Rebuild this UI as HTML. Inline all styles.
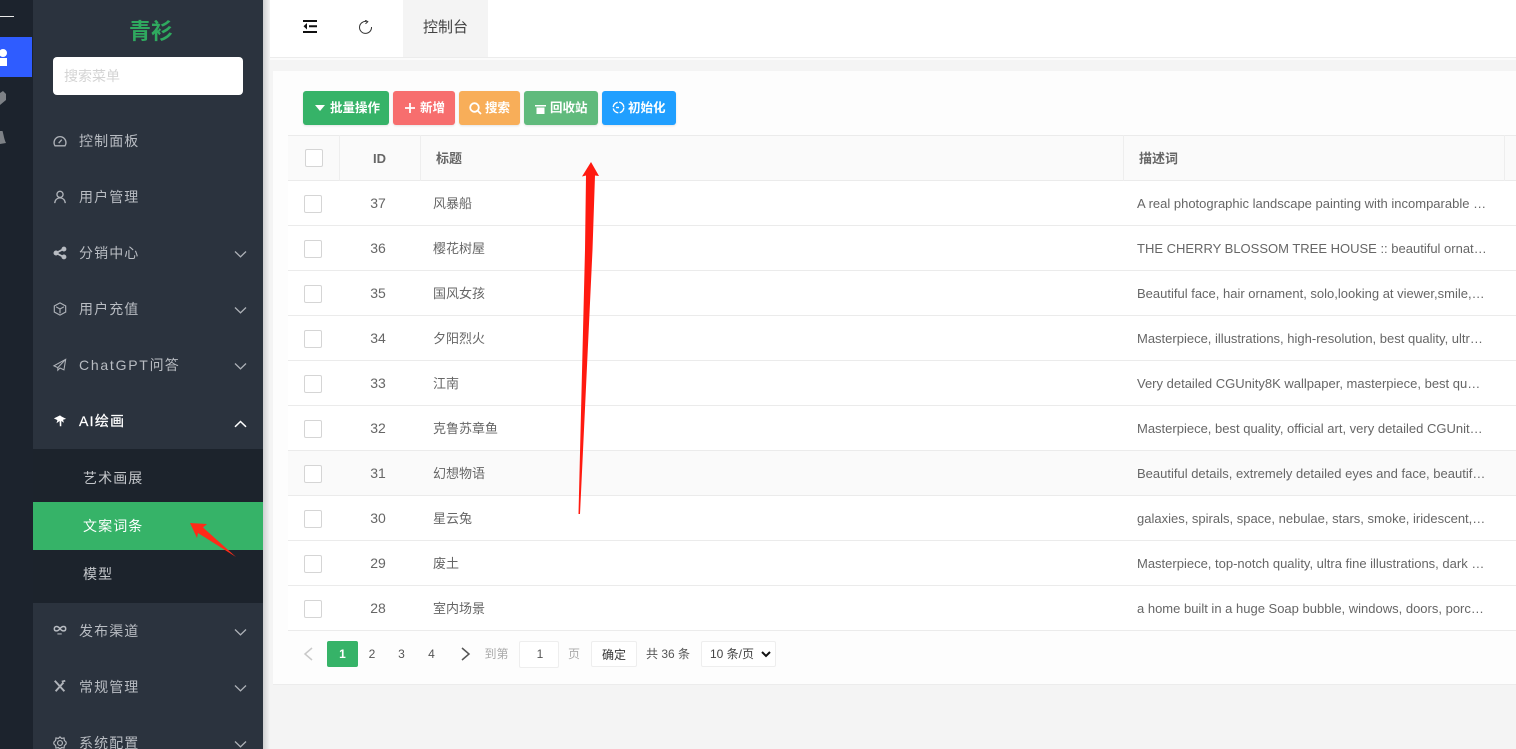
<!DOCTYPE html>
<html lang="zh"><head><meta charset="utf-8"><title>青衫</title>
<style>
*{box-sizing:border-box}
html,body{margin:0;padding:0;width:1516px;height:749px;overflow:hidden;background:#f4f4f4;font-family:"Liberation Sans","Noto Sans CJK SC",sans-serif;font-size:14px;color:#666}
.a{position:absolute;white-space:nowrap}
#strip{left:0;top:0;width:33px;height:749px;background:#1c232d}
#side{left:33px;top:0;width:230px;height:749px;background:#2b333e;overflow:hidden}
#shadow{left:263px;top:0;width:7px;height:749px;background:linear-gradient(90deg,#cfd0d2,#f4f4f4)}
.mi{left:46px;height:20px;line-height:20px;color:#b8bcc2;letter-spacing:1.1px;font-size:14px}
.ic{position:absolute;left:20px;width:14px;height:14px;overflow:visible}
.ch{position:absolute;left:201px;width:13px;height:8px}
.sub{left:50px;height:20px;line-height:20px;color:#c3c6ca;letter-spacing:1.1px}
.btn{position:absolute;top:91px;height:34px;border-radius:3px;color:#fff;font-size:12.5px;font-weight:bold;line-height:34px;white-space:nowrap;box-shadow:0 1px 2px rgba(0,0,0,.1)}
.btn svg{position:absolute;top:10px}
.btn span{position:absolute;top:0}
.hl{position:absolute;left:288px;width:1228px;height:1px;background:#ebebeb}
.cb{position:absolute;width:18px;height:18px;background:#fff;border:1px solid #d5d5d5;border-radius:2px;left:304px}
.id{position:absolute;left:339px;width:78px;text-align:center;height:20px;line-height:20px;font-size:14px;color:#666}
.ti{position:absolute;left:433px;height:20px;line-height:22px;font-size:13px;color:#666}
.de{position:absolute;left:1137px;width:350px;height:22px;line-height:22px;font-size:13px;color:#666;overflow:hidden;white-space:nowrap;text-overflow:ellipsis}
.th{position:absolute;top:149px;height:20px;line-height:20px;font-weight:bold;font-size:13px;color:#666}
.vl{position:absolute;top:135px;width:1px;height:46px;background:#eee}
.pg{position:absolute;top:641px;height:26px;line-height:26px;font-size:12px;color:#555;text-align:center}
</style></head><body>
<div class="a" id="strip"></div>
<div class="a" style="left:0;top:16px;width:14px;height:1px;background:#e8e8e8"></div>
<div class="a" style="left:0;top:37px;width:32px;height:40px;background:#2f5cff"></div>
<svg class="a" style="left:0;top:47px" width="10" height="20"><circle cx="3" cy="6" r="4" fill="#fff"/><rect x="-2" y="11" width="9" height="8" fill="#fff"/></svg>
<svg class="a" style="left:0;top:90px" width="8" height="16"><path d="M0 3L3 1L6 4V10L0 15Z" fill="#7d8186"/></svg>
<svg class="a" style="left:0;top:128px" width="8" height="18"><path d="M0 3H2.500C3.500 6 4 11 6 15L0 16Z" fill="#7d8186"/></svg>

<div class="a" id="side">
<div class="a" style="left:96px;top:18px;font-size:22px;line-height:28px;font-weight:bold;color:#2fa95f">青衫</div>
<div class="a" style="left:20px;top:57px;width:190px;height:38px;background:#fff;border-radius:4px;line-height:39px;padding-left:11px;font-size:14px;color:#d4d4d4">搜索菜单</div>

<svg class="ic" style="top:134px" viewBox="0 0 16 16" fill="none" stroke="#aeb2b8" stroke-width="1.500"><path d="M2.300 13.500A6.800 6.800 0 1 1 13.700 13.500Z"/><path d="M6.500 10.500L10 6.500"/></svg>
<div class="a mi" style="top:131px">控制面板</div>
<svg class="ic" style="top:190px" viewBox="0 0 16 16" fill="none" stroke="#b0b4ba" stroke-width="1.500"><circle cx="8" cy="5" r="3.500"/><path d="M2 15C2.200 11 5 9 8 9S13.800 11 14 15"/></svg>
<div class="a mi" style="top:187px">用户管理</div>
<svg class="ic" style="top:246px" viewBox="0 0 16 16" fill="#b8bcc2" stroke="#b8bcc2"><circle cx="3.500" cy="8" r="2.400"/><circle cx="12.500" cy="3.500" r="2.300"/><circle cx="12.500" cy="12.500" r="2.300"/><path d="M3.500 8L12 3.500M3.500 8L12 12.500" stroke-width="2"/></svg>
<div class="a mi" style="top:243px">分销中心</div>
<svg class="ic" style="top:302px" viewBox="0 0 16 16" fill="none" stroke="#aeb2b8" stroke-width="1.300"><path d="M8 1L14.500 4.500V11.500L8 15L1.500 11.500V4.500Z"/><path d="M3.500 5.500L8 8L12.500 5.500M8 8V13"/></svg>
<div class="a mi" style="top:299px">用户充值</div>
<svg class="ic" style="top:358px" viewBox="0 0 16 16" fill="none" stroke="#aeb2b8" stroke-width="1.200"><path d="M1 9L14.500 1.500L12.500 13.500L8 11.500L5.500 14V11Z"/><path d="M5.500 11L14.500 1.500"/></svg>
<div class="a mi" style="top:355px"><span style="letter-spacing:1.75px">ChatGPT</span>问答</div>
<svg class="ic" style="top:414px" viewBox="0 0 16 16" fill="#fff"><path d="M1 5L6 2.500L8 1.500L10 3L15 5.500L11.500 6.500L12.500 10L9.500 8L9.500 14H7.800L7.500 8L4 10.500L5 7Z"/></svg>
<div class="a mi" style="top:411px;color:#fff;-webkit-text-stroke:.25px #fff;letter-spacing:1.3px">AI绘画</div>

<div class="a" style="left:0;top:449px;width:230px;height:154px;background:#1c232c"></div>
<div class="a" style="left:0;top:502px;width:230px;height:48px;background:#36b368"></div>
<div class="a sub" style="top:468px">艺术画展</div>
<div class="a sub" style="top:516px;color:#fff">文案词条</div>
<div class="a sub" style="top:564px">模型</div>

<svg class="ic" style="top:623px" viewBox="0 0 16 16" fill="none" stroke="#b8bcc2" stroke-width="1.700"><path d="M8 6.500C6.500 4.500 5.500 4 4 4C2.500 4 1.500 5 1.500 6.500S2.500 9 4 9C5.500 9 6.500 8.500 8 6.500C9.500 4.500 10.500 4 12 4C13.500 4 14.500 5 14.500 6.500S13.500 9 12 9C10.500 9 9.500 8.500 8 6.500Z"/><path d="M5 12.500H10" stroke-width="1.200"/></svg>
<div class="a mi" style="top:621px">发布渠道</div>
<svg class="ic" style="top:679px" viewBox="0 0 16 16" fill="none" stroke="#b0b4ba" stroke-width="2.200"><path d="M3 14L12 4M2 2L13 14"/><path d="M10 3L14 2" stroke-width="2"/></svg>
<div class="a mi" style="top:677px">常规管理</div>
<svg class="ic" style="top:736px" viewBox="0 0 16 16" fill="none" stroke="#b0b4ba" stroke-width="1.400"><circle cx="8" cy="8" r="2.800"/><path d="M8 1L9.800 2.800L12.600 2.200L13 5L15 7V9L13 11L12.600 13.800L9.800 13.200L8 15L6.200 13.200L3.400 13.800L3 11L1 9V7L3 5L3.400 2.200L6.200 2.800Z"/></svg>
<div class="a mi" style="top:733px">系统配置</div>

<svg class="ch" style="top:250px" viewBox="0 0 13 8" fill="none" stroke="#adb1b7" stroke-width="1.300"><path d="M1 1.500L6.500 6.800L12 1.500"/></svg>
<svg class="ch" style="top:306px" viewBox="0 0 13 8" fill="none" stroke="#adb1b7" stroke-width="1.300"><path d="M1 1.500L6.500 6.800L12 1.500"/></svg>
<svg class="ch" style="top:362px" viewBox="0 0 13 8" fill="none" stroke="#adb1b7" stroke-width="1.300"><path d="M1 1.500L6.500 6.800L12 1.500"/></svg>
<svg class="ch" style="top:420px" viewBox="0 0 13 8" fill="none" stroke="#fff" stroke-width="1.500"><path d="M1 6.800L6.500 1.500L12 6.800"/></svg>
<svg class="ch" style="top:628px" viewBox="0 0 13 8" fill="none" stroke="#adb1b7" stroke-width="1.300"><path d="M1 1.500L6.500 6.800L12 1.500"/></svg>
<svg class="ch" style="top:684px" viewBox="0 0 13 8" fill="none" stroke="#adb1b7" stroke-width="1.300"><path d="M1 1.500L6.500 6.800L12 1.500"/></svg>
<svg class="ch" style="top:740px" viewBox="0 0 13 8" fill="none" stroke="#adb1b7" stroke-width="1.300"><path d="M1 1.500L6.500 6.800L12 1.500"/></svg>
</div>
<div class="a" id="shadow"></div>

<div class="a" style="left:270px;top:0;width:1246px;height:57px;background:#fff"></div>
<div class="a" style="left:270px;top:57px;width:1246px;height:3px;background:#fbfbfb;border-top:1px solid #ececec"></div>
<div class="a" style="left:403px;top:0;width:85px;height:57px;background:#f4f4f4;text-align:center;line-height:55px;font-size:15px;color:#444">控制台</div>
<svg class="a" style="left:303px;top:20px" width="15" height="13" viewBox="0 0 15 13" fill="none" stroke="#111" stroke-width="2"><path d="M0 1H14M6 6.300H14M0 12H14"/><path d="M4 3L.5 6.300L4 9.500" fill="#111" stroke="none"/></svg>
<svg class="a" style="left:358px;top:20px" width="15" height="15" viewBox="0 0 15 15" fill="none" stroke="#333" stroke-width="1"><path d="M8.500 1.500A6 6 0 1 0 13.500 7"/><path d="M7 0L9.800 1.700L7.500 3.800" stroke-width="1"/></svg>

<div class="a" style="left:273px;top:71px;width:1243px;height:614px;background:#fdfdfd;border-bottom:1px solid #ececec"></div>
<div class="a" style="left:288px;top:181px;width:1228px;height:450px;background:#fff"></div>
<div class="a" style="left:288px;top:451px;width:1228px;height:45px;background:#fafafa"></div>

<div class="btn" style="left:303px;width:86px;background:#36b368"><svg style="left:12px;top:14px" width="10" height="6"><path d="M0 0H10L5 6Z" fill="#fff"/></svg><span style="left:27px">批量操作</span></div>
<div class="btn" style="left:393px;width:62px;background:#f76e6e"><svg style="left:12px;top:12px" width="10" height="10"><path d="M5 0V10M0 5H10" stroke="#fff" stroke-width="1.800"/></svg><span style="left:27px">新增</span></div>
<div class="btn" style="left:459px;width:61px;background:#f8ae59"><svg style="left:10px;top:11px" width="13" height="13" fill="none" stroke="#fff" stroke-width="1.800"><circle cx="5.500" cy="5.500" r="4.300"/><path d="M8.500 8.500L12 12"/></svg><span style="left:26px">搜索</span></div>
<div class="btn" style="left:524px;width:74px;background:#60ba7c"><svg style="left:11px;top:13px" width="11" height="10" fill="#fff"><path d="M0 1H11V2.500H0ZM1.500 3.500H9.500V10H1.500Z"/></svg><span style="left:26px">回收站</span></div>
<div class="btn" style="left:602px;width:74px;background:#209fff"><svg style="left:10px;top:10px" width="13" height="13" fill="none" stroke="#fff" stroke-width="1.400" stroke-dasharray="7 1.500"><circle cx="6.500" cy="6.500" r="5.300"/><path d="M4 6.500H7" stroke-dasharray="none"/></svg><span style="left:26px">初始化</span></div>

<div class="a" style="left:288px;top:135px;width:1228px;height:46px;background:#fafafa;border-top:1px solid #ebebeb;border-bottom:1px solid #ebebeb"></div>
<div class="vl" style="left:339px"></div><div class="vl" style="left:420px"></div><div class="vl" style="left:1123px"></div><div class="vl" style="left:1504px"></div>
<div class="cb" style="left:305px;top:149px"></div>
<div class="th" style="left:339px;width:81px;text-align:center">ID</div>
<div class="th" style="left:436px">标题</div>
<div class="th" style="left:1139px">描述词</div>

<div class="hl" style="top:225px"></div><div class="hl" style="top:270px"></div><div class="hl" style="top:315px"></div><div class="hl" style="top:360px"></div><div class="hl" style="top:405px"></div><div class="hl" style="top:450px"></div><div class="hl" style="top:495px"></div><div class="hl" style="top:540px"></div><div class="hl" style="top:585px"></div><div class="hl" style="top:630px"></div>

<div class="cb" style="top:195px"></div><div class="id" style="top:193px">37</div><div class="ti" style="top:193px">风暴船</div><div class="de" style="top:193px">A real photographic landscape painting with incomparable reality, super wide angle</div>
<div class="cb" style="top:240px"></div><div class="id" style="top:238px">36</div><div class="ti" style="top:238px">樱花树屋</div><div class="de" style="top:238px">THE CHERRY BLOSSOM TREE HOUSE :: beautiful ornate treehouse</div>
<div class="cb" style="top:285px"></div><div class="id" style="top:283px">35</div><div class="ti" style="top:283px">国风女孩</div><div class="de" style="top:283px">Beautiful face, hair ornament, solo,looking at viewer,smile,closed mouth,lipstick</div>
<div class="cb" style="top:330px"></div><div class="id" style="top:328px">34</div><div class="ti" style="top:328px">夕阳烈火</div><div class="de" style="top:328px">Masterpiece, illustrations, high-resolution, best quality, ultra-detailed, sunset</div>
<div class="cb" style="top:375px"></div><div class="id" style="top:373px">33</div><div class="ti" style="top:373px">江南</div><div class="de" style="top:373px">Very detailed CGUnity8K wallpaper, masterpiece, best quality, illustration</div>
<div class="cb" style="top:420px"></div><div class="id" style="top:418px">32</div><div class="ti" style="top:418px">克鲁苏章鱼</div><div class="de" style="top:418px">Masterpiece, best quality, official art, very detailed CGUnity 8k wallpaper</div>
<div class="cb" style="top:465px"></div><div class="id" style="top:463px">31</div><div class="ti" style="top:463px">幻想物语</div><div class="de" style="top:463px">Beautiful details, extremely detailed eyes and face, beautiful detailed nose</div>
<div class="cb" style="top:510px"></div><div class="id" style="top:508px">30</div><div class="ti" style="top:508px">星云兔</div><div class="de" style="top:508px">galaxies, spirals, space, nebulae, stars, smoke, iridescent, intricate detail</div>
<div class="cb" style="top:555px"></div><div class="id" style="top:553px">29</div><div class="ti" style="top:553px">废土</div><div class="de" style="top:553px">Masterpiece, top-notch quality, ultra fine illustrations, dark wasteland ruins</div>
<div class="cb" style="top:600px"></div><div class="id" style="top:598px">28</div><div class="ti" style="top:598px">室内场景</div><div class="de" style="top:598px">a home built in a huge Soap bubble, windows, doors, porches, awnings, middle</div>

<svg class="a" style="left:303px;top:647px" width="10" height="14" fill="none" stroke="#c9c9c9" stroke-width="1.500"><path d="M9 1L2 7L9 13"/></svg>
<div class="pg" style="left:327px;top:641px;width:31px;background:#36b368;color:#fff;border-radius:2px;font-weight:bold">1</div>
<div class="pg" style="left:357px;width:30px">2</div>
<div class="pg" style="left:387px;width:29px">3</div>
<div class="pg" style="left:417px;width:29px">4</div>
<svg class="a" style="left:461px;top:647px" width="10" height="14" fill="none" stroke="#555" stroke-width="1.500"><path d="M1 1L8 7L1 13"/></svg>
<div class="pg" style="left:484.500px;color:#aaa">到第</div>
<div class="pg" style="left:519px;top:641px;width:40px;height:27px;background:#fff;border:1px solid #eee;border-radius:2px;line-height:25px;padding-left:2px">1</div>
<div class="pg" style="left:568px;color:#aaa">页</div>
<div class="pg" style="left:591px;width:46px;background:#fff;border:1px solid #eee;border-radius:2px;line-height:27px;color:#333">确定</div>
<div class="pg" style="left:646px;color:#555">共 36 条</div>
<div class="pg" style="left:701px;width:75px;background:#fff;border:1px solid #eee;border-radius:2px;text-align:left;padding-left:8px;line-height:24px;color:#444">10 条/页</div>
<svg class="a" style="left:761px;top:651px" width="10" height="7" fill="none" stroke="#111" stroke-width="2"><path d="M1 1L5 5L9 1"/></svg>

<svg class="a" style="left:0;top:0;pointer-events:none" width="1516" height="749"><path d="M591 162L599 176L595 175.500L592.500 250L580 514L578.500 514L585 250L586 175.500L582 176.500Z" fill="#ff1a10"/><path d="M190 523L207 524L203 527.500L236 557L198 533L197 538Z" fill="#ff2a18"/></svg>
</body></html>
